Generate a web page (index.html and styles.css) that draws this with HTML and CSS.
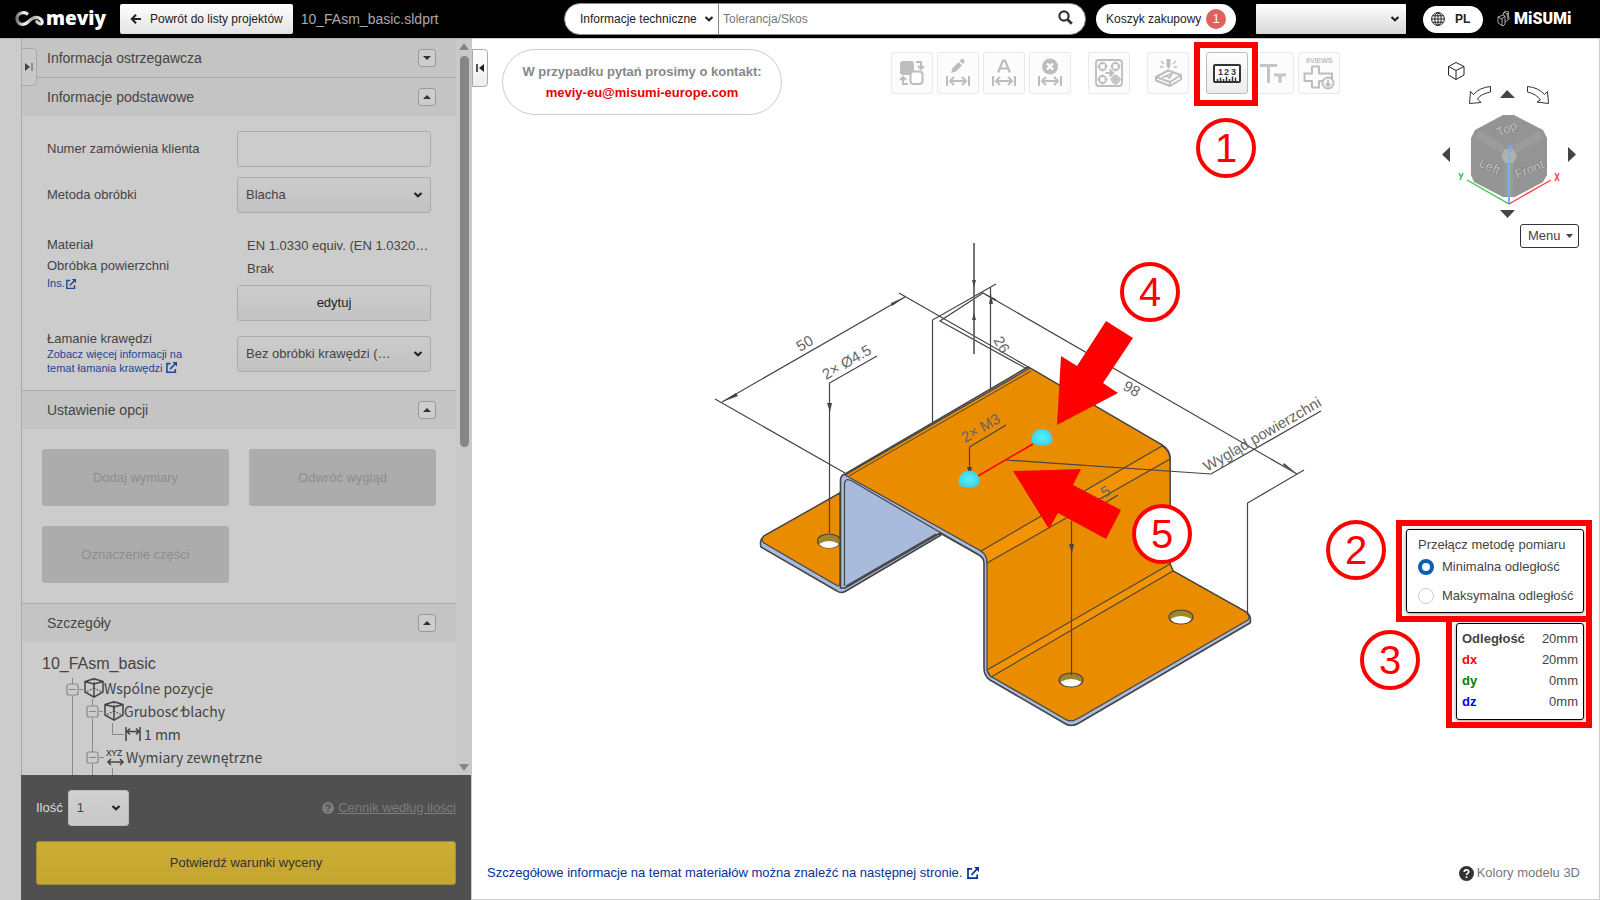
FILE: index.html
```html
<!DOCTYPE html>
<html lang="pl">
<head>
<meta charset="utf-8">
<meta name="viewport" content="width=device-width, initial-scale=1">
<title>meviy – 10_FAsm_basic.sldprt</title>
<link rel="stylesheet" href="styles.css">
</head>
<body>
<svg class="defs" aria-hidden="true">
  <symbol id="caret" viewBox="0 0 10 6"><path d="M1.500 1L5 4.300 8.500 1" fill="none" stroke="#222" stroke-width="2.200"/></symbol>
  <symbol id="ext" viewBox="0 0 12 12"><path d="M5 1.800H1v9.400h9.200V7.500M4.500 7.800l5.500-5.800" fill="none" stroke="currentColor" stroke-width="1.700"/><path d="M7 0h5v5z" fill="currentColor"/></symbol>
  <symbol id="dim" viewBox="0 0 24 10"><path d="M1 0v10M23 0v10M4 5h16M8 1L4 5l4 4M16 1l4 4-4 4" fill="none" stroke="#bdbdbd" stroke-width="2"/></symbol>
  <symbol id="box3d" viewBox="0 0 20 20"><path d="M1 3.500L10 .8l9 2.700V14l-9 5.200L1 14zM1 3.500L10 6l9-2.500M10 6v13" fill="none" stroke="#444" stroke-width="1.500" stroke-linejoin="round"/><path d="M10 1v9M10 10l-8 4M10 10l8 4" fill="none" stroke="#444" stroke-width="1.200" stroke-dasharray="1.500 1.500"/></symbol>
</svg>

<header class="topbar">
  <a class="logo" href="#" aria-label="meviy">
    <svg width="29" height="16" viewBox="0 0 29 16" aria-hidden="true"><defs><linearGradient id="lg"><stop offset="0" stop-color="#777"/><stop offset=".3" stop-color="#fff"/><stop offset=".6" stop-color="#aaa"/><stop offset="1" stop-color="#eee"/></linearGradient></defs><path d="M13 3.500C10 .5 2 1 2 7.500s7 7.500 11 3.500 7-6 11-4 4 6 1.500 6-3-2.500-5-3" fill="none" stroke="url(#lg)" stroke-width="3.200"/></svg>
    <span>meviy</span>
  </a>
  <button class="back" type="button"><svg width="11" height="10" viewBox="0 0 11 10"><path d="M11 5H2M6 .8L1.800 5 6 9.200" fill="none" stroke="#222" stroke-width="2"/></svg>Powrót do listy projektów</button>
  <span class="filename">10_FAsm_basic.sldprt</span>
  <form class="search">
    <span class="picker kind"><select aria-label="Zakres"><option>Informacje techniczne</option></select><svg><use href="#caret"/></svg></span>
    <input type="text" placeholder="Tolerancja/Skos" aria-label="Szukaj">
    <button type="button" aria-label="Szukaj"><svg width="15" height="15" viewBox="0 0 15 15"><circle cx="6" cy="6" r="4.600" fill="none" stroke="#333" stroke-width="2.200"/><path d="M9.500 9.500l4.300 4.300" stroke="#333" stroke-width="2.800"/></svg></button>
  </form>
  <button class="cart" type="button">Koszyk zakupowy<span>1</span></button>
  <span class="picker user"><select aria-label="Użytkownik"><option></option></select><svg><use href="#caret"/></svg></span>
  <button class="lang" type="button"><svg width="14" height="14" viewBox="0 0 14 14" fill="none" stroke="#222"><circle cx="7" cy="7" r="6.400"/><ellipse cx="7" cy="7" rx="3.200" ry="6.400"/><path d="M7 .6v12.800M.6 7h12.800M1.600 3.800h10.800M1.600 10.200h10.800"/></svg>PL</button>
  <a class="misumi" href="#" aria-label="MiSUMi"><svg width="13" height="16" viewBox="0 0 13 16" fill="none" stroke="#ccc" stroke-width=".8"><path d="M1 6l5-2 2 1v8l-2 2-5-3zM1 6l4 2v7M5 8l3-3M6 4l1-3 4-1 1 8-4 3M7 1l3 2 1 5M10 3l2-1"/></svg><span>MiSUMi</span></a>
</header>

<main class="work">
  <aside class="sidebar">
    <div class="scroller">
      <div class="sections">
        <button class="handle" type="button" aria-label="Zwiń"><svg width="8" height="8" viewBox="0 0 8 8"><path d="M0 0l5 4-5 4z" fill="#444"/><path d="M7 0v8" stroke="#777" stroke-width="1.500"/></svg></button>
        <section><h2>Informacja ostrzegawcza<button type="button" aria-label="Rozwiń"><svg width="8" height="4" viewBox="0 0 8 4"><path d="M0 0h8L4 4z" fill="#333"/></svg></button></h2></section>
        <section>
          <h2>Informacje podstawowe<button type="button" aria-label="Zwiń"><svg width="8" height="4" viewBox="0 0 8 4"><path d="M0 4h8L4 0z" fill="#333"/></svg></button></h2>
          <div class="form">
            <label for="order">Numer zamówienia klienta</label>
            <input id="order" type="text">
            <label for="method">Metoda obróbki</label>
            <span class="picker"><select id="method"><option>Blacha</option></select><svg><use href="#caret"/></svg></span>
            <div class="mat-labels"><p>Materiał</p><p>Obróbka powierzchni</p><a href="#">Ins.<svg width="10" height="10"><use href="#ext"/></svg></a></div>
            <div class="mat-values"><p>EN 1.0330 equiv. (EN 1.0320…</p><p>Brak</p><button type="button">edytuj</button></div>
            <div class="edge"><label for="edge">Łamanie krawędzi</label><a href="#">Zobacz więcej informacji na temat łamania krawędzi <svg width="11" height="11"><use href="#ext"/></svg></a></div>
            <span class="picker edge-pick"><select id="edge"><option>Bez obróbki krawędzi (…</option></select><svg><use href="#caret"/></svg></span>
          </div>
        </section>
        <section>
          <h2>Ustawienie opcji<button type="button" aria-label="Zwiń"><svg width="8" height="4" viewBox="0 0 8 4"><path d="M0 4h8L4 0z" fill="#333"/></svg></button></h2>
          <div class="options">
            <button type="button" disabled>Dodaj wymiary</button>
            <button type="button" disabled>Odwróć wygląd</button>
            <button type="button" disabled>Oznaczenie części</button>
          </div>
        </section>
        <section>
          <h2>Szczegóły<button type="button" aria-label="Zwiń"><svg width="8" height="4" viewBox="0 0 8 4"><path d="M0 4h8L4 0z" fill="#333"/></svg></button></h2>
          <div class="tree">
            <svg class="tree-lines" width="120" height="110" viewBox="60 670 120 110" fill="none" stroke="#888"><path d="M72.500 678v6M72.500 696v84M79 689.500h4M92.500 699v7M92.500 718v34M92.500 764v16M99 711.500h4M112.500 723v11.500H124M99 757.500h5M112.500 768v12"/><g stroke-width="1.200"><rect x="67" y="684" width="11" height="11" rx="2"/><rect x="87" y="706" width="11" height="11" rx="2"/><rect x="87" y="752" width="11" height="11" rx="2"/><path d="M69 689.500h7M89 711.500h7M89 757.500h7"/></g></svg>
            <p class="tree-title">10_FAsm_basic</p>
            <ul>
              <li class="l1"><svg width="20" height="20"><use href="#box3d"/></svg>Wspólne pozycje</li>
              <li class="l2"><svg width="20" height="20"><use href="#box3d"/></svg>Grubość blachy</li>
              <li class="l3"><svg width="16" height="14" viewBox="0 0 16 14" fill="none" stroke="#444" stroke-width="1.500"><path d="M1 0v14M15 0v14M2 4.500h12M5 1.500l-3 3 3 3M11 1.500l3 3-3 3"/></svg>1 mm</li>
              <li class="l2 xyz"><svg width="20" height="18" viewBox="0 0 20 18"><text x="0" y="8" class="tiny">XYZ</text><path d="M2 14h15M5 11l-3 3 3 3M14 11l3 3-3 3" fill="none" stroke="#444" stroke-width="1.500"/></svg>Wymiary zewnętrzne</li>
              <li class="l4"><svg width="20" height="18" viewBox="0 0 20 18"><text x="0" y="10" class="tiny">X</text></svg></li>
            </ul>
          </div>
        </section>
      </div>
      <div class="bar"><svg width="10" height="7" viewBox="0 0 10 7"><path d="M5 0l5 7H0z" fill="#868686"/></svg><i></i><svg width="10" height="7" viewBox="0 0 10 7"><path d="M5 7l5-7H0z" fill="#868686"/></svg></div>
    </div>
    <footer class="quote">
      <div class="qty">
        <label for="qty">Ilość</label>
        <span class="picker"><select id="qty"><option>1</option></select><svg><use href="#caret"/></svg></span>
        <a href="#"><svg width="12" height="12" viewBox="0 0 12 12"><circle cx="6" cy="6" r="6" fill="#7d7d7d"/><path d="M4 4.800C4 2.300 8 2.300 8 4.600 8 6 6 5.800 6 7.200M6 8.300v1.600" fill="none" stroke="#505050" stroke-width="1.500"/></svg><span>Cennik według ilości</span></a>
      </div>
      <button class="confirm" type="button">Potwierdź warunki wyceny</button>
    </footer>
  </aside>

  <section class="viewer">
    <svg class="scene" viewBox="472 39 1127 860" fill="none" stroke="#444" stroke-width="1.200" aria-hidden="true">
      <g stroke-linejoin="round">
        <path d="M840 493L764 536Q759 540 761 547L837 591Q841 594 846 591L941 535 845 478z" fill="#a8bbdc" stroke-width="1.500"/>
        <path d="M840 493L764 536Q760 540 764 543L836 585Q840 588 840 582z" fill="#ea8c00"/>
        <ellipse cx="829" cy="541" rx="11.500" ry="7" fill="#a08628"/><path d="M819 544q10-6 20 0-3 4-10 4t-10-4z" fill="#fff" stroke="none"/>
        <path d="M840.500 588V482Q840 475 845 474L1028 367 1162 445Q1170 450 1170 458V564L1173 571 1246 612Q1252 616 1250 623L1079 723Q1071 728 1064 723L990 680Q984 676 984 668V563Q984 558 979 555L940 533 845 588z" fill="#a8bbdc" stroke-width="1.600"/>
        <path d="M844.500 586V484Q845 477 852 481L979 555M846 586L936 534"/>
        <path d="M845 475L1030 368 1162 445Q1170 450 1170 458V564L1173 571 1246 612Q1251 616 1248 620L1079 718Q1071 723 1065 719L992 677Q987 674 987 668V561Q987 555 981 551z" fill="#ea8c00"/>
        <path d="M981 551L1162 446Q1169 450 1170 459L987 563Q987 555 981 551z" fill="#f59200" stroke-width="1.100"/>
        <path d="M987 670L1170 564 1173 571 991 677z" fill="#f59200" stroke-width="1.100"/>
        <path d="M849 476L1031 371" stroke-width="1"/>
        <g fill="#a08628"><ellipse cx="1071" cy="680" rx="12" ry="7"/><ellipse cx="1181" cy="617" rx="12" ry="7"/></g>
        <g fill="#fff" stroke="none"><path d="M1060.500 682q10.500-6 21 0-3 4.500-10.500 4.500t-10.500-4.500zM1170.500 619q10.500-6 21 0-3 4.500-10.500 4.500t-10.500-4.500z"/></g>
      </g>
      <g stroke-width="1.200">
        <path d="M715 399L845 473M722 402L905 297M899 293L1030 368M829.500 533V383L877 356M932.500 422V320L996 284M1027 369L940 321 983 293 1297 474M990.500 389V287M1304 470L1247.500 503V615M969.500 473V447L1006 425M1006 460L1211 474 1321 411M1098 507L1118 495M1071.500 675V521"/>
        <path d="M974 243V354" stroke-width="1.800" stroke="#666"/>
      </g>
      <g fill="#444" stroke="none">
        <path d="M827 403h5l-2 9zM967 467h5l-2 9zM1069 544h5l-2 9zM972 280h4l-2 7zM972 320h4l-2-7zM989 304h4l-2-10zM722 402l14-9 2 3zM905 297l-14 6 1 3zM983 293l13 6-1 2zM1297 474l-14-9 1-2z"/>
      </g>
      <g class="cad">
        <text transform="translate(800 352) rotate(-30)">50</text>
        <text transform="translate(826 380) rotate(-30)">2× Ø4.5</text>
        <text transform="translate(965 443) rotate(-30)">2× M3</text>
        <text transform="translate(1122 389) rotate(30)">98</text>
        <text transform="translate(993 340) rotate(60)">26</text>
        <text transform="translate(1101 500) rotate(-30)">.5</text>
        <text transform="translate(1207 472) rotate(-30)">Wygląd powierzchni</text>
      </g>
      <path d="M1033 444L978 476" stroke="#f00" stroke-width="1.500"/>
      <defs><radialGradient id="ball"><stop offset="0" stop-color="#55f0ff"/><stop offset="1" stop-color="#3ed4e8"/></radialGradient></defs>
      <g fill="url(#ball)" stroke="none"><path d="M1031.500 440C1031.500 425 1052.500 425 1052.500 440 1052.500 447.500 1031.500 447.500 1031.500 440z"/><path d="M958.500 482C958.500 467 979.500 467 979.500 482 979.500 489.500 958.500 489.500 958.500 482z"/></g>
    </svg>

    <div class="tools-row">
      <button class="handle" type="button" aria-label="Zwiń panel"><svg width="8" height="8" viewBox="0 0 8 8"><path d="M8 0L3 4l5 4z" fill="#222"/><path d="M1 0v8" stroke="#222" stroke-width="1.500"/></svg></button>
      <div class="contact"><span>W przypadku pytań prosimy o kontakt:</span><a href="#">meviy-eu@misumi-europe.com</a></div>
      <div class="toolbar">
        <button type="button" aria-label="Zamień"><svg viewBox="0 0 42 42"><rect x="9" y="9" width="14" height="14" rx="3" fill="#bdbdbd"/><rect x="19.500" y="19.500" width="12" height="12.500" rx="3" fill="#fff" stroke="#bdbdbd" stroke-width="2"/><path d="M25 10h5v6M27 14l3 3 3-3M17 32h-5v-6M9 28l3-3 3 3" fill="none" stroke="#bdbdbd" stroke-width="2"/></svg></button>
        <button type="button" aria-label="Edytuj wymiar"><svg viewBox="0 0 42 42"><path d="M14 21l1.500-5 6-6 3.500 3.500-6 6zM22.500 9l2-2c1-1 4 2 3 3l-1.500 2z" fill="#bdbdbd"/><use href="#dim" x="9" y="24" width="24" height="10"/></svg></button>
        <button type="button" aria-label="Tekst wymiaru"><svg viewBox="0 0 42 42"><path d="M15 20.500L20 8.500h2l5 12M17 16.500h8" fill="none" stroke="#bdbdbd" stroke-width="2.200"/><use href="#dim" x="9" y="24" width="24" height="10"/></svg></button>
        <button type="button" aria-label="Usuń wymiar"><svg viewBox="0 0 42 42"><circle cx="21" cy="14.500" r="8" fill="#bdbdbd"/><path d="M18 11.500l6 6M24 11.500l-6 6" stroke="#fff" stroke-width="2.400"/><use href="#dim" x="9" y="24" width="24" height="10"/></svg></button>
        <button class="gap" type="button" aria-label="Otwory"><svg viewBox="0 0 42 42" fill="none" stroke="#bdbdbd" stroke-width="1.800"><rect x="8" y="8" width="26" height="26" rx="3"/><circle cx="14.500" cy="14.500" r="3.600"/><circle cx="27.500" cy="14.500" r="3.600"/><circle cx="14.500" cy="27.500" r="3.600"/><circle cx="27.500" cy="27.500" r="3.600"/><circle cx="27.500" cy="27.500" r="1.500" fill="#bdbdbd"/><path d="M14.500 9.500v3M14.500 16.500v3M9.500 14.500h3M16.500 14.500h3M27.500 9.500v3M27.500 16.500v3M22.500 14.500h3M29.500 14.500h3M14.500 22.500v3M14.500 29.500v3M9.500 27.500h3M16.500 27.500h3M27.500 22.500v2M27.500 31v2M22.500 27.500h2M31 27.500h2" stroke-width="1.300"/><path d="M17.500 21h7M21.500 17.500L25 21l-3.500 3.500" stroke-width="2"/></svg></button>
        <button class="gap" type="button" aria-label="Grawerowanie"><svg viewBox="0 0 42 42" fill="none" stroke="#bdbdbd" stroke-width="2" stroke-linejoin="round"><path d="M9 25l12-6.500 13 4.500-11 7zM9 25v3.500L23 34l11-6.500V23M23 30v4"/><path d="M15 25.500l10-4-3 5.500M18 24l5 1.500" stroke-width="1.600"/><path d="M19.500 7h4v7l-2 3-2-3z" fill="#bdbdbd" stroke="none"/><path d="M14 9l3 3M29 9l-3 3M13 15h3.500M30 15h-3.500" stroke-width="1.400"/></svg></button>
        <button class="gap active" type="button" aria-label="Pomiar"><svg viewBox="0 0 42 42"><rect x="8" y="13" width="26" height="17" rx="1" fill="#fff" stroke="#333" stroke-width="2"/><text x="12" y="23" class="ruler">1</text><text x="18" y="23" class="ruler">2</text><text x="25" y="23" class="ruler">3</text><path d="M11.500 27v3M14.500 25.500V30M17.500 27v3M20.500 24.500V30M23.500 27v3M26.500 24.500V30M29.500 25.500V30" stroke="#333" stroke-width="1.500"/></svg></button>
        <button type="button" aria-label="Rozmiar tekstu"><svg viewBox="0 0 42 42"><path d="M8 13.500h17M16.500 12v19M22 23h12M28 22v9" stroke="#c4c4c4" stroke-width="3" fill="none"/></svg></button>
        <button type="button" aria-label="6 widoków"><svg viewBox="0 0 42 42"><text x="8" y="11" class="views">6VIEWS</text><path d="M14 14.500h7v7h13V29H21v6.500h-7V29H6.500v-7.500H14z" fill="none" stroke="#bdbdbd" stroke-width="2" stroke-linejoin="round"/><circle cx="30" cy="31" r="5.500" fill="#fff" stroke="#bdbdbd" stroke-width="2"/><path d="M30 27.500V34M27.500 31.500l2.500 2.700 2.500-2.700" fill="none" stroke="#bdbdbd" stroke-width="1.900"/></svg></button>
      </div>
      <div class="viewcube">
        <svg width="140" height="164" viewBox="1440 60 140 164" fill="none" stroke="#555">
          <path d="M1448.500 66.500l7.500-4 8 4v8.500l-8 4.500-7.500-4.500zM1448.500 66.500l7.500 4 8-4M1456 70.500v9" stroke="#222"/>
          <path d="M1490.500 86.500V92q-10 2-13 7l3.500 3.500-11.500 1 1-12 3 3q6-7 17-8zM1527.500 86.500V92q9 2 13 8l-3.500 2 11.500 1.500-1-12-3 3q-6-7-17-8z" stroke="#333"/>
          <path d="M1500 98l7-8 8 8zM1450 147v15l-8-7.500zM1568 147v15l8-7.500zM1500 210h15l-7.500 8z" fill="#444" stroke="none"/>
          <path d="M1503 115h11l29 15 4 8v37l-4 7-28 15h-12l-29-15-3-7v-37l4-8z" fill="#949494" stroke="none"/>
          <path d="M1475 138l4-7 25 14v9zM1543 138l-4-7-24 14v9z" fill="#9c9c9c" stroke="none"/>
          <path d="M1505 162h8v34h-8z" fill="#9c9c9c" stroke="none"/>
          <path d="M1505 149h8l4 7-4 7h-8l-4-7z" fill="#b0b0b0" stroke="none"/>
          <g class="cube-text"><text transform="translate(1499 137) rotate(-24)">Top</text><text transform="translate(1478 166) rotate(24)">Left</text><text transform="translate(1517 179) rotate(-22)">Front</text></g>
          <g stroke-width="1.400"><path d="M1509 204V156" stroke="#6db3f8" stroke-width="2"/><path d="M1509 204l-42-24" stroke="#2fc552"/><path d="M1509 204l42-24" stroke="#f44"/></g>
          <g stroke-width="1.400"><path d="M1459 173l2 4M1463 173l-3 7" stroke="#2fc552"/><path d="M1555 173l4 8M1559 173l-4 8" stroke="#f44"/><path d="M1507 147l5-1-4 6 4-1" stroke="#6db3f8"/></g>
        </svg>
        <button class="menu" type="button">Menu<svg width="7" height="4" viewBox="0 0 7 4"><path d="M0 0h7L3.500 4z" fill="#444"/></svg></button>
      </div>
    </div>

    <div class="measure">
      <fieldset class="method">
        <p>Przełącz metodę pomiaru</p>
        <label><input type="radio" name="m" checked>Minimalna odległość</label>
        <label><input type="radio" name="m">Maksymalna odległość</label>
      </fieldset>
      <table class="result">
        <tr><th>Odległość</th><td>20mm</td></tr>
        <tr class="dx"><th>dx</th><td>20mm</td></tr>
        <tr class="dy"><th>dy</th><td>0mm</td></tr>
        <tr class="dz"><th>dz</th><td>0mm</td></tr>
      </table>
    </div>

    <div class="viewer-foot">
      <a href="#">Szczegółowe informacje na temat materiałów można znaleźć na następnej stronie. <svg width="12" height="12"><use href="#ext"/></svg></a>
      <button type="button"><svg width="15" height="15" viewBox="0 0 12 12"><circle cx="6" cy="6" r="6" fill="#333"/><path d="M4.200 4.800C4.200 2.600 7.800 2.600 7.800 4.600 7.800 6 6 5.800 6 7.200M6 8.200v1.300" fill="none" stroke="#fff" stroke-width="1.300"/></svg>Kolory modelu 3D</button>
    </div>

    <svg class="notes" viewBox="472 39 1127 860" aria-hidden="true">
      <g fill="none" stroke="#f00" stroke-width="6"><path d="M1197 45h58v58h-58zM1399 523h190v96h-190zM1449 619h140v106h-140z"/></g>
      <path d="M1106 321L1133 338 1103 383 1118 393 1057 425 1061 356 1077 366zM1013 471L1081 469 1073 485 1121 510 1106 539 1058 513 1049 529z" fill="#f00"/>
      <g fill="#fff" stroke="#f00" stroke-width="4"><circle cx="1226" cy="148" r="28"/><circle cx="1356" cy="550" r="28"/><circle cx="1390" cy="660" r="28"/><circle cx="1150" cy="292" r="28"/><circle cx="1162" cy="534" r="28"/></g>
      <g class="digits"><text x="1226" y="162">1</text><text x="1356" y="564">2</text><text x="1390" y="674">3</text><text x="1150" y="306">4</text><text x="1162" y="548">5</text></g>
    </svg>
  </section>
</main>
</body>
</html>
```
FILE: styles.css
```css
* { box-sizing: border-box; }
body { margin: 0; height: 100vh; display: flex; flex-direction: column; overflow: hidden; background: #fff; color: #444; font: 13px/16px "Liberation Sans", Arial, sans-serif; }
button, input, select { font: inherit; color: inherit; margin: 0; }
button { padding: 0; cursor: pointer; }
p, h2, ul { margin: 0; padding: 0; }
a { color: #003399; text-decoration: none; }
svg { flex: none; }
.defs { position: absolute; width: 0; height: 0; }

.picker { position: relative; display: flex; }
.picker select { appearance: none; width: 100%; height: 36px; padding: 0 8px; border: 1px solid #aaa; border-radius: 3px; background: linear-gradient(#cccccc, #c2c2c2); }
.picker svg { position: absolute; right: 8px; top: 50%; width: 10px; height: 6px; margin-top: -3px; pointer-events: none; }

/* top bar */
.topbar { display: flex; align-items: center; height: 38px; flex: none; background: #000; padding: 0 28px 0 15px; font-size: 12px; color: #222; }
.logo { display: flex; align-items: center; gap: 2px; width: 105px; color: #fff; font: 800 19px/22px "Open Sans", "Liberation Sans", sans-serif; }
.logo span { padding-bottom: 2px; }
.back { display: flex; align-items: center; gap: 9px; height: 30px; padding: 0 10px; border: 0; border-radius: 2px; background: linear-gradient(#fff, #e2e2e2); }
.filename { margin-left: 8px; font-size: 14px; color: #aaa; }
.search { display: flex; align-items: center; width: 522px; height: 32px; margin: 0 10px 0 auto; background: #fff; border: 1px solid #888; border-radius: 16px; }
.kind { width: 154px; }
.kind select { height: 30px; padding: 0 0 0 15px; border: 0; border-right: 1px solid #888; border-radius: 16px 0 0 16px; background: none; }
.kind svg { right: 5px; }
.search input { flex: 1; min-width: 0; border: 0; padding: 0 4px; background: none; outline: 0; }
.search input::placeholder { color: #777; opacity: 1; }
.search button { border: 0; background: none; padding: 0 12px; height: 20px; }
.cart { display: flex; align-items: center; justify-content: space-between; width: 140px; height: 30px; padding: 0 10px; border: 0; border-radius: 15px; background: #fff; }
.cart span { width: 20px; height: 20px; border-radius: 10px; background: #e06060; color: #fff; line-height: 20px; font-size: 13px; }
.user { width: 150px; margin-left: 20px; }
.user select { height: 30px; border: 0; border-radius: 1px; background: linear-gradient(#fff, #d8d8d8); }
.user svg { right: 6px; }
.lang { display: flex; align-items: center; gap: 10px; width: 60px; height: 27px; margin: 0 14px 0 17px; padding: 0 8px; border: 0; border-radius: 14px; background: #fff; font-weight: bold; font-size: 12px; }
.misumi { display: flex; align-items: center; gap: 4px; width: 75px; color: #fff; font: 900 16px/18px Roboto, "Liberation Sans", sans-serif; }

.work { flex: 1; min-height: 0; display: flex; }

/* sidebar */
.sidebar { display: flex; flex-direction: column; flex: none; width: 472px; padding-left: 21px; background: #ccc; border-top: 1px solid #b5b5b5; }
.scroller { flex: 1; min-height: 0; display: flex; overflow: hidden; border-left: 1px solid #aaa; }
.sections { position: relative; width: 434px; }
.handle { width: 16px; height: 38px; display: flex; align-items: center; justify-content: center; border: 1px solid #aaa; border-radius: 0 4px 4px 0; background: linear-gradient(#fff, #eee); }
.sections .handle { position: absolute; left: -1px; top: 9px; background: #c8c8c8; }
h2 { display: flex; align-items: center; justify-content: space-between; height: 38px; padding: 0 20px 0 25px; background: #c4c4c4; font-weight: normal; font-size: 14px; }
h2 button { width: 18px; height: 18px; display: flex; align-items: center; justify-content: center; border: 1px solid #999; border-radius: 3px; background: #cdcdcd; }
section + section { border-top: 1px solid #aaa; }
.form { display: grid; grid-template-columns: 170px 194px; column-gap: 20px; row-gap: 10px; align-items: center; padding: 15px 25px 15px; }
.form input { height: 36px; min-width: 0; border: 1px solid #aaa; border-radius: 3px; background: #ccc; }
.mat-labels, .mat-values { align-self: start; margin-top: 11px; }
.mat-labels p { line-height: 21px; }
.mat-labels a, .edge a { font-size: 11px; line-height: 14px; color: #1f4593; }
.mat-labels a svg { vertical-align: -2px; margin-left: 1px; }
.mat-labels a { display: block; }
.mat-values p { padding-left: 10px; line-height: 23px; white-space: nowrap; }
.mat-values button { width: 100%; height: 36px; margin-top: 5px; border: 1px solid #aaa; border-radius: 3px; background: linear-gradient(#cdcdcd, #c2c2c2); color: #222; }
.edge a, .edge label { display: block; }
.edge a { width: 150px; }
.edge a svg { vertical-align: -1px; }
.edge-pick { align-self: start; margin-top: 5px; }
.options { display: grid; grid-template-columns: 187px 187px; gap: 20px; padding: 20px; }
.options button { height: 57px; border: 0; border-radius: 3px; background: #acacac; color: #8c8c8c; }
.tree { position: relative; padding: 12px 20px 0; }
.tree-lines { position: absolute; left: 38px; top: 28px; }
.tree-title { font-size: 16px; line-height: 20px; }
ul { list-style: none; font-family: "Noto Sans CJK JP", "Noto Sans", sans-serif; font-size: 14px; padding-top: 2px; }
li { display: flex; align-items: center; height: 23px; position: relative; }
.l1 { padding-left: 42px; }
.l2 { padding-left: 62px; }
.l3 { padding-left: 83px; gap: 3px; }
.xyz { padding-left: 64px; }
.l4 { padding-left: 88px; }
li svg { overflow: visible; }
.tiny { font: 600 9px "Open Sans", sans-serif; fill: #444; }
.bar { width: 16px; display: flex; flex-direction: column; align-items: center; padding: 4px 2px; margin-left: auto; background: #c9c9c9; }
.bar i { width: 9px; height: 391px; margin: 6px 0 auto; border-radius: 5px; background: #868686; }

.quote { flex: none; width: 450px; height: 125px; padding: 15px 15px; background: #505050; }
.qty { display: flex; align-items: center; color: #ddd; }
.qty .picker { width: 61px; margin-left: 5px; color: #444; }
.qty select { border-color: #bbb; background: linear-gradient(#d0d0d0, #c8c8c8); }
.qty a { display: flex; align-items: center; gap: 4px; margin-left: auto; color: #7d7d7d; text-decoration: underline; }
.confirm { width: 100%; height: 44px; margin-top: 15px; border: 1px solid #a18c38; border-radius: 3px; background: linear-gradient(#ccae33, #c4a62f); color: #333; }

/* viewer */
.viewer { position: relative; flex: 1; min-width: 0; display: flex; flex-direction: column; background: #fff; border: 1px solid #ccc; border-left: 0; }
.scene, .notes { position: absolute; left: 0; top: 0; width: 100%; height: 100%; pointer-events: none; }
.cad { font: 15px "Liberation Sans", sans-serif; fill: #666; stroke: none; }
.digits { font: 40px "Liberation Sans", sans-serif; fill: #f00; text-anchor: middle; }
.tools-row { position: relative; display: flex; align-items: flex-start; padding-top: 10px; }
.contact { display: flex; flex-direction: column; justify-content: center; align-items: center; gap: 5px; width: 280px; height: 66px; margin-left: 14px; border: 1px solid #ccc; border-radius: 33px; background: #fff; font-weight: bold; color: #888; }
.contact a { color: #e60000; }
.toolbar { display: flex; gap: 4px; margin: 3px 100px 0 auto; }
.toolbar button { width: 42px; height: 42px; border: 1px solid #e9e9e9; border-radius: 3px; background: #fcfcfc; }
.toolbar svg { display: block; width: 42px; height: 42px; margin: -1px; }
.toolbar .gap { margin-left: 13px; }
.toolbar .active { border-color: #bbb; background: linear-gradient(#fdfdfd, #ececec); }
.ruler { font: bold 9px "Liberation Sans", sans-serif; fill: #333; }
.views { font: bold 7px "Liberation Sans", sans-serif; fill: #bdbdbd; }
.viewcube { display: flex; flex-direction: column; align-items: flex-end; width: 140px; margin: 11px 19px 0 0; }
.viewcube > svg { display: block; }
.cube-text { font: 13px "Liberation Sans", sans-serif; fill: #c4c4c4; stroke: #777; stroke-width: 1; paint-order: stroke; }
.menu { display: flex; align-items: center; justify-content: space-between; width: 59px; height: 24px; margin-right: 1px; padding: 0 5px 0 7px; border: 1px solid #333; border-radius: 3px; background: #fff; }
.measure { position: relative; display: flex; flex-direction: column; align-items: flex-end; gap: 10px; margin: auto 15px 145px 0; }
.method, .result { margin: 0; border: 1px solid #000; border-radius: 3px; background: #fff; box-shadow: 0 1px 4px #999; }
.method { width: 178px; height: 84px; padding: 7px 0 7px 11px; }
.method label { display: flex; align-items: center; gap: 8px; height: 24px; margin-bottom: 5px; white-space: nowrap; }
.method p { line-height: 16px; margin-bottom: 2px; }
.method input { appearance: none; flex: none; width: 16px; height: 16px; border: 1px solid #ccc; border-radius: 8px; }
.method input:checked { border: 4px solid #0860b5; }
.result { width: 128px; height: 96px; padding: 4px 5px 7px; border-spacing: 0; }
.result th, .result td { padding: 0; text-align: left; line-height: 21px; }
.result td { text-align: right; }
.dx th { color: #f00; }
.dy th { color: #008000; }
.dz th { color: #00f; }
.viewer-foot { position: relative; display: flex; justify-content: space-between; align-items: center; height: 16px; margin: 0 19px 18px 15px; }
.viewer-foot svg { vertical-align: -2px; margin-left: 1px; }
.viewer-foot button { display: flex; align-items: center; gap: 3px; border: 0; background: none; color: #777; }
```
